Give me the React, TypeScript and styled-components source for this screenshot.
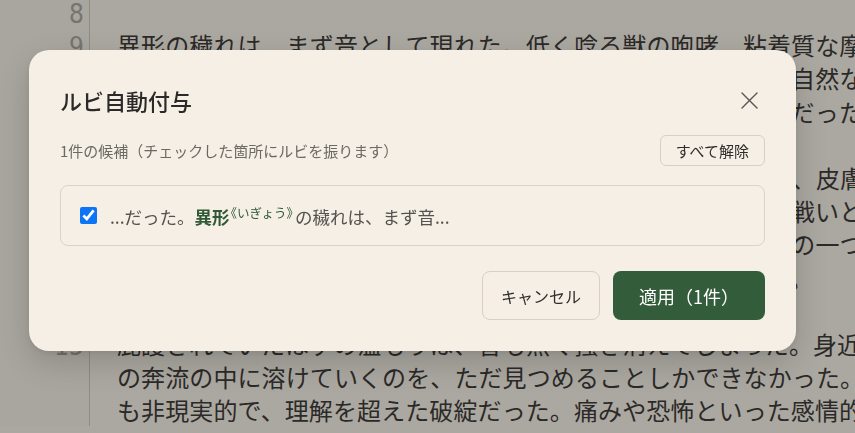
import React from "react";
import styled, { createGlobalStyle } from "styled-components";

const GlobalStyle = createGlobalStyle`
  html, body {
    margin: 0;
    padding: 0;
    overflow: hidden;
    background: #aba8a1;
  }
  body {
    font-family: "Noto Sans CJK JP", "Noto Sans", sans-serif;
  }
`;

const Editor = styled.div`
  width: 855px;
  height: 433px;
  overflow: hidden;
  background: #aba8a1;
  margin-top: -5px;
`;

const Row = styled.div`
  display: grid;
  grid-template-columns: 90px 1fr;
  height: 33.2px;
`;

const Gutter = styled.div`
  border-right: 1px solid #8e8b84;
  background: #a9a69f;
  color: #77746d;
  font-family: "Liberation Sans Narrow", "DejaVu Sans Condensed", "Liberation Sans", sans-serif;
  font-stretch: condensed;
  font-size: 26px;
  line-height: 33.2px;
  text-align: right;
  padding: 3px 5px 0 0;
  box-sizing: border-box;
`;

const Line = styled.div`
  padding-left: 27px;
  font-size: 24px;
  letter-spacing: 0.1px;
  line-height: 33.2px;
  color: #2b2a28;
  white-space: nowrap;
  overflow: hidden;
`;

const Overlay = styled.div`
  position: fixed;
  inset: 0;
  display: flex;
  align-items: flex-start;
  padding: 50px 0 0 29px;
`;

const Dialog = styled.div`
  width: 767px;
  box-sizing: border-box;
  padding: 31px;
  background: #f5efe5;
  border-radius: 20px;
  box-shadow: 0 12px 32px rgba(0, 0, 0, 0.16), 0 2px 6px rgba(0, 0, 0, 0.08);
`;

const Header = styled.div`
  display: flex;
  align-items: center;
  justify-content: space-between;
  height: 38px;
`;

const Title = styled.h2`
  margin: 0;
  font-size: 22px;
  font-weight: 500;
  color: #2b2a28;
`;

const CloseButton = styled.button`
  width: 32px;
  height: 32px;
  padding: 0;
  border: none;
  background: transparent;
  display: flex;
  align-items: center;
  justify-content: center;
  color: #5a5955;
  cursor: pointer;
`;

const SubRow = styled.div`
  margin-top: 16px;
  display: flex;
  align-items: center;
  justify-content: space-between;
  height: 31px;
`;

const SubText = styled.span`
  font-size: 15px;
  color: #6b6964;
`;

const GhostButton = styled.button<{ $h: number; $px: number; $fs: number }>`
  height: ${(p) => p.$h}px;
  padding: 0 ${(p) => p.$px}px;
  border: 1px solid #d8d0c3;
  border-radius: ${(p) => (p.$h > 40 ? 8 : 6)}px;
  background: transparent;
  font-family: "Noto Sans CJK JP", "Noto Sans", sans-serif;
  font-size: ${(p) => p.$fs}px;
  color: #2f2e2b;
  cursor: pointer;
`;

const PrimaryButton = styled.button`
  height: 49px;
  padding: 0 26px;
  border: none;
  border-radius: 8px;
  background: #335c3b;
  font-family: "Noto Sans CJK JP", "Noto Sans", sans-serif;
  font-size: 18px;
  color: #ffffff;
  cursor: pointer;
`;

const Candidates = styled.div`
  margin-top: 19px;
  border: 1px solid #dbd3c7;
  border-radius: 8px;
`;

const Candidate = styled.label`
  height: 59px;
  display: flex;
  align-items: center;
  padding: 0 18px;
`;

const Check = styled.input`
  width: 17px;
  height: 17px;
  margin: 0 13px 0 1px;
  accent-color: #0b75f5;
`;

const Snippet = styled.span`
  font-size: 17.5px;
  color: #55534f;
`;

const Base = styled.strong`
  font-weight: 700;
  color: #2f5a35;
`;

const Reading = styled.span`
  font-size: 12.5px;
  color: #2f5a35;
  vertical-align: 6px;
  margin: 0 -4px 0 -5px;
`;

const Footer = styled.div`
  margin-top: 25px;
  display: flex;
  justify-content: flex-end;
  gap: 13px;
`;

const rows: { n?: string; t: string }[] = [
  { n: "8", t: "" },
  { n: "9", t: "異形の穢れは、まず音として現れた。低く唸る獣の咆哮、粘着質な摩擦音" },
  { t: "それは耳を塞いでも頭蓋の奥底にまで響き渡る、あまりにも不自然な響きであり" },
  { t: "響きであり、世界の理そのものが軋みゆくかのような深い錯覚だった。" },
  { t: "" },
  { t: "次に訪れたのは匂いだった。腐臭と鉄錆が混ざり合い鼻を刺し、皮膚に" },
  { t: "まとわりつく。それは生き物の気配というよりも、終わりなき戦いという" },
  { t: "う概念そのものが、静かに崩れ落ちていく瞬間の、確かな兆しの一つだった" },
  { t: "だったのかもしれない。誰もがそれを悟り、黙って息を呑んだ。" },
  { t: "" },
  { n: "15", t: "庇護されていたはずの温もりは、音も無く掻き消えてしまった。身近にいた" },
  { t: "の奔流の中に溶けていくのを、ただ見つめることしかできなかった。" },
  { t: "も非現実的で、理解を超えた破綻だった。痛みや恐怖といった感情的" },
];

export default function App() {
  return (
    <>
      <GlobalStyle />
      <Editor>
        {rows.map((r, i) => (
          <Row key={i}>
            <Gutter>{r.n ?? ""}</Gutter>
            <Line>{r.t}</Line>
          </Row>
        ))}
      </Editor>
      <Overlay>
        <Dialog role="dialog" aria-label="ルビ自動付与">
          <Header>
            <Title>ルビ自動付与</Title>
            <CloseButton aria-label="閉じる">
              <svg width="17" height="17" viewBox="0 0 17 17" fill="none">
                <path d="M1 1L16 16M16 1L1 16" stroke="currentColor" strokeWidth="1.4" strokeLinecap="round" />
              </svg>
            </CloseButton>
          </Header>
          <SubRow>
            <SubText>1件の候補（チェックした箇所にルビを振ります）</SubText>
            <GhostButton $h={31} $px={15} $fs={15}>すべて解除</GhostButton>
          </SubRow>
          <Candidates>
            <Candidate>
              <Check type="checkbox" defaultChecked />
              <Snippet>
                ...だった。<Base>異形</Base>
                <Reading>《いぎょう》</Reading>の穢れは、まず音...
              </Snippet>
            </Candidate>
          </Candidates>
          <Footer>
            <GhostButton $h={49} $px={18} $fs={16}>キャンセル</GhostButton>
            <PrimaryButton>適用（1件）</PrimaryButton>
          </Footer>
        </Dialog>
      </Overlay>
    </>
  );
}
